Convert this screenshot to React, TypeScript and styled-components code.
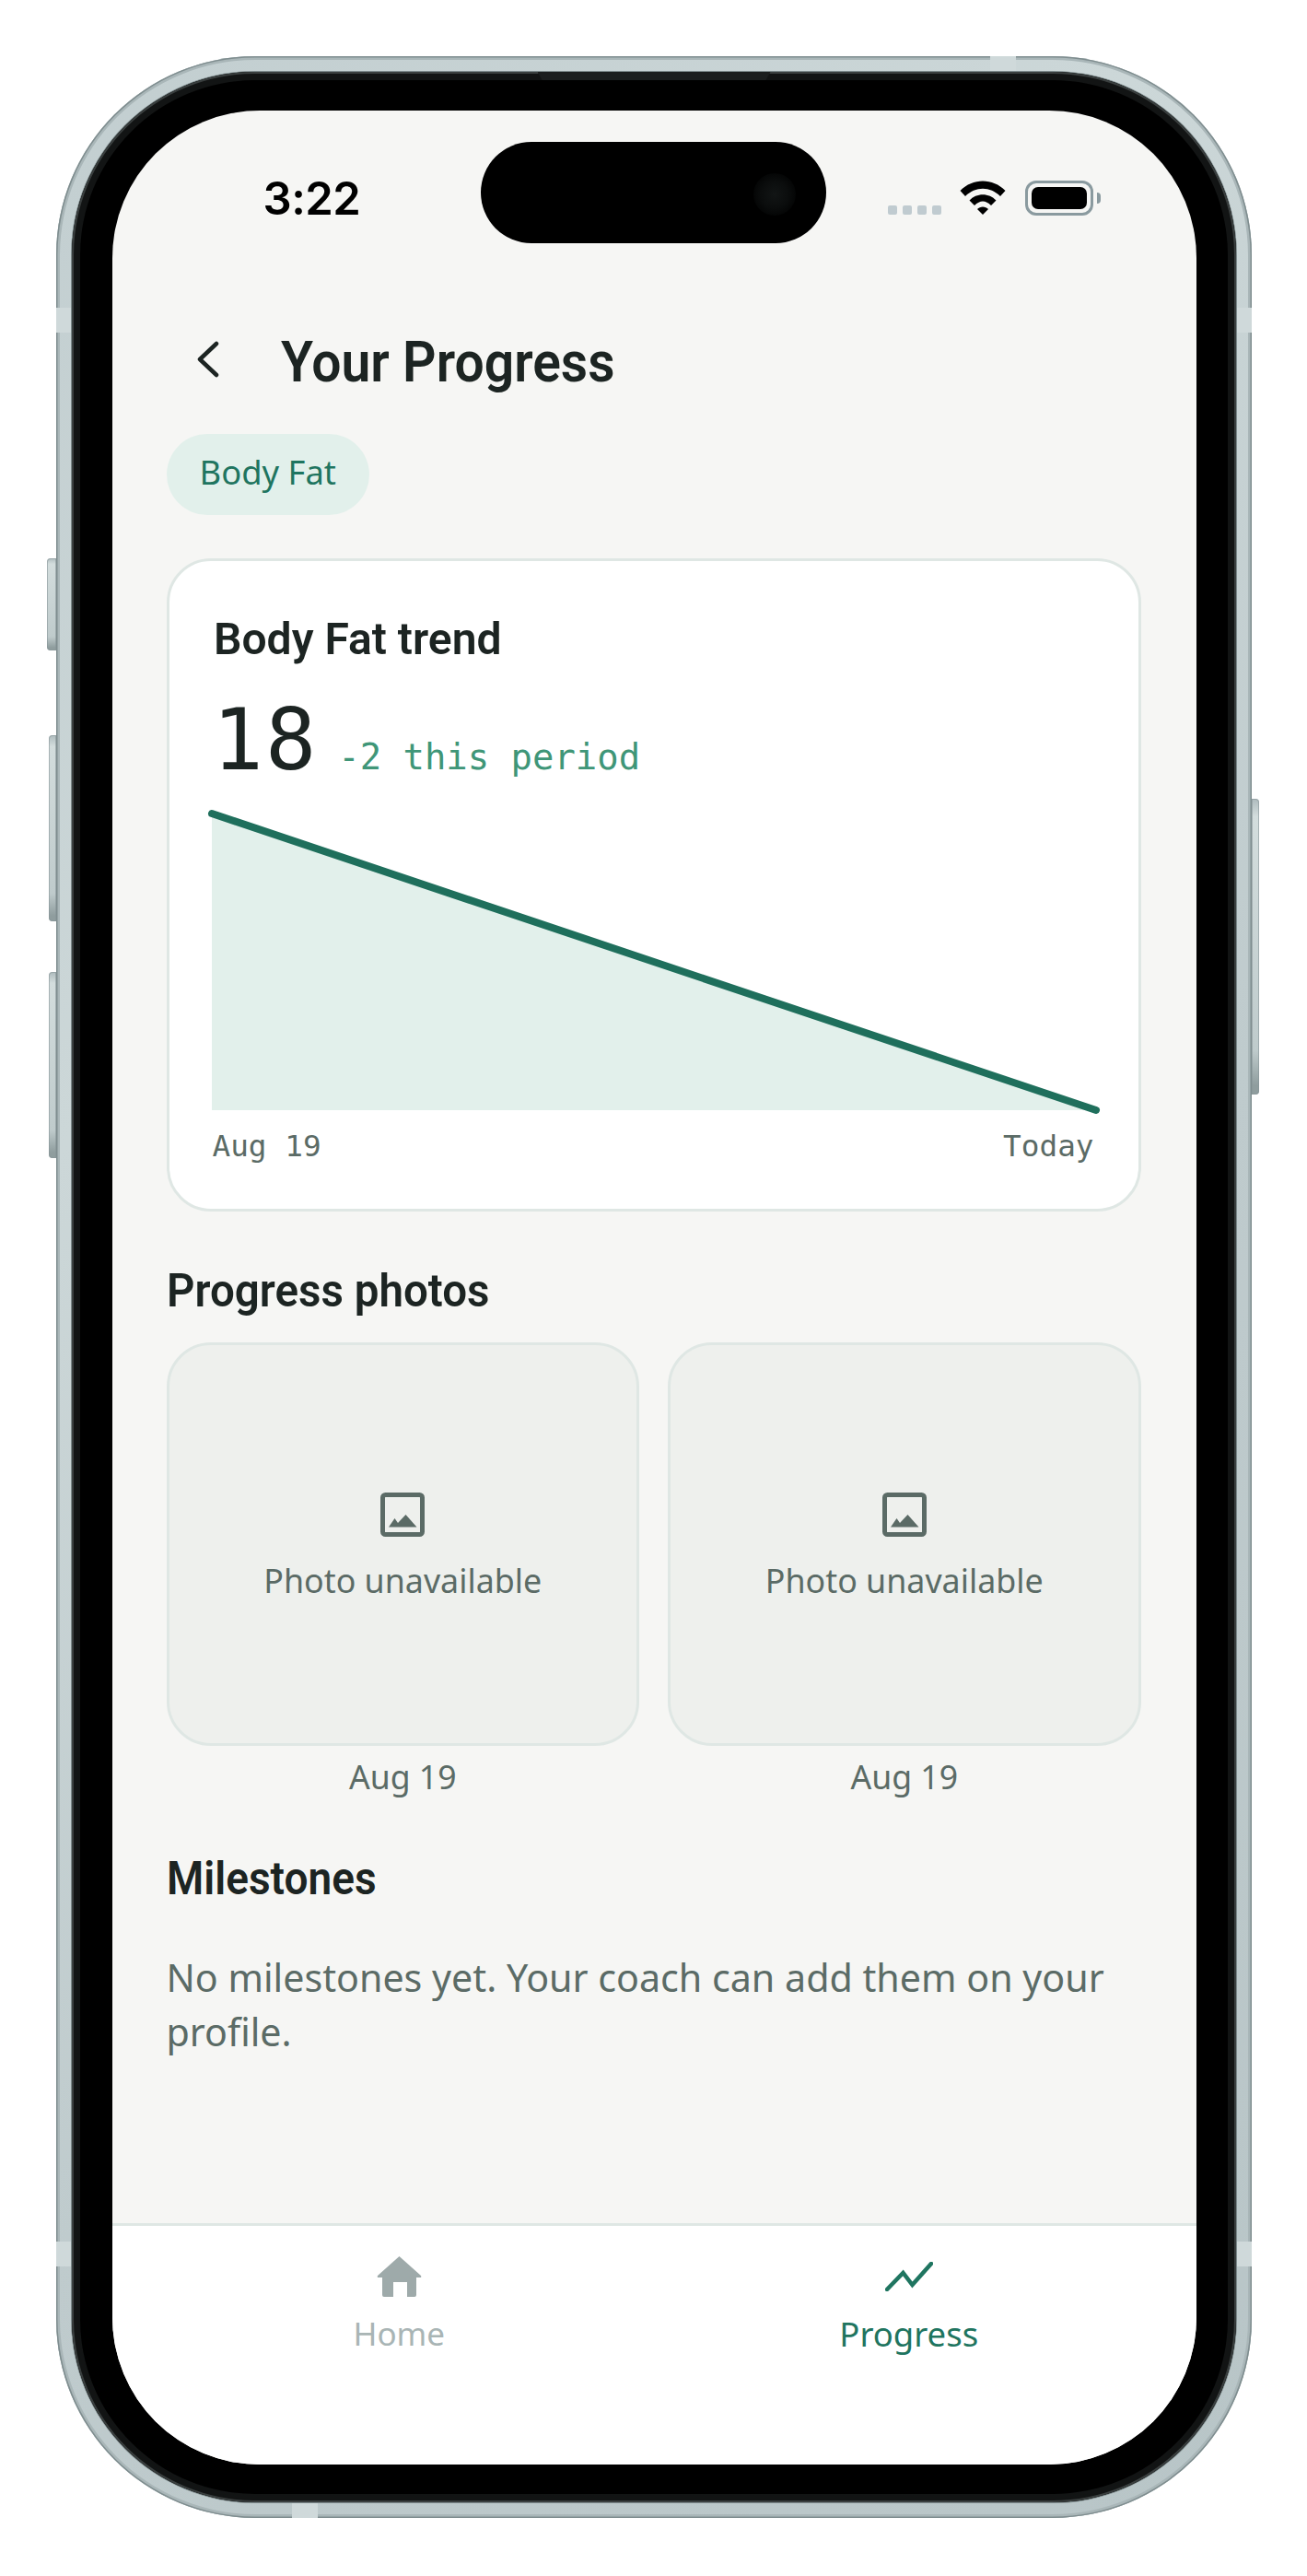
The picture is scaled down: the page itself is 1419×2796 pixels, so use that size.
import React from "react";
import styled, { createGlobalStyle } from "styled-components";

const Global = createGlobalStyle`
  html, body { margin: 0; padding: 0; background: #fff; }
  body { font-family: "Noto Sans", Roboto, sans-serif; }
  * { box-sizing: border-box; }
`;

const Page = styled.div`
  width: 1419px;
  height: 2796px;
  padding-top: 61px;
  display: flex;
  justify-content: center;
  align-items: flex-start;
  overflow: hidden;
`;

const Device = styled.div`
  position: relative;
  width: 1298px;
  height: 2672px;
  padding: 17px;
  border-radius: 216px;
  background: linear-gradient(135deg, #c2ced0 0%, #ccd7d8 30%, #bfcbcd 60%, #b8c5c7 100%);
  box-shadow: inset 0 0 0 1.5px #7f8d8f, inset 0 0 0 4px #a9b6b8;
`;

const SideButton = styled.div<{ $side: "left" | "right"; $top: number; $height: number; $width: number }>`
  position: absolute;
  top: ${(p) => p.$top}px;
  height: ${(p) => p.$height}px;
  width: ${(p) => p.$width}px;
  ${(p) => (p.$side === "left" ? `left: -${p.$width}px;` : `right: -${p.$width}px;`)}
  border-radius: ${(p) => (p.$side === "left" ? "4px 0 0 4px" : "0 4px 4px 0")};
  background: linear-gradient(180deg, #aebbbd 0%, #d3dddd 6%, #bfcbcc 85%, #8f9d9e 97%);
  box-shadow: inset 0 0 0 1px #87959799;
`;

const Band = styled.div<{ $x?: number; $y?: number; $right?: boolean; $bottom?: boolean; $horizontal?: boolean }>`
  position: absolute;
  background: #cfd9da;
  ${(p) =>
    p.$horizontal
      ? `left: ${p.$x}px; width: 28px; height: 17px; ${p.$bottom ? "bottom: 0;" : "top: 0;"}`
      : `top: ${p.$y}px; height: 27px; width: 17px; ${p.$right ? "right: 0;" : "left: 0;"}`}
`;

const Bezel = styled.div`
  position: relative;
  width: 100%;
  height: 100%;
  padding: 42px 43px 41px 44px;
  border-radius: 199px;
  background: #000;
  box-shadow: 0 0 0 1px #7c898b, inset 0 0 0 2px #3a3f3f, inset 0 0 0 9px #121414;
`;

const Speaker = styled.div`
  position: absolute;
  top: 0;
  left: 506px;
  width: 253px;
  height: 9px;
  background: #1b1e1e;
  clip-path: polygon(0 0, 100% 0, 98% 100%, 2% 100%);
`;

const Screen = styled.div`
  position: relative;
  width: 100%;
  height: 100%;
  border-radius: 160px;
  background: #f6f6f4;
  overflow: hidden;
  display: flex;
  flex-direction: column;
`;

const StatusBar = styled.div`
  position: relative;
  flex: none;
  height: 144px;
  display: flex;
  justify-content: space-between;
  align-items: flex-start;
  padding: 0 112px 0 164px;
`;

const Time = styled.div`
  margin-top: 66px;
  font-family: Inter, sans-serif;
  font-weight: 600;
  font-size: 49px;
  line-height: 60px;
  color: #000;
  letter-spacing: -0.5px;
`;

const Island = styled.div`
  position: absolute;
  left: 400px;
  top: 34px;
  width: 375px;
  height: 110px;
  border-radius: 55px;
  background: #000;
`;

const Lens = styled.div`
  position: absolute;
  left: 296px;
  top: 34px;
  width: 46px;
  height: 46px;
  border-radius: 50%;
  background: radial-gradient(circle, #121515 0%, #0b0d0d 45%, #040505 72%, #000 100%);
`;

const StatusIcons = styled.div`
  margin-top: 76px;
  display: flex;
  align-items: flex-start;
`;

const Dots = styled.div`
  display: flex;
  gap: 6px;
  margin-top: 27px;
  margin-right: 20px;
`;

const Dot = styled.span`
  width: 10px;
  height: 10px;
  border-radius: 2px;
  background: #c0cbd0;
`;

const Wifi = styled.svg`
  display: block;
  width: 50px;
  height: 37px;
  margin-right: 21px;
`;

const Battery = styled.div`
  position: relative;
  width: 74px;
  height: 38px;
  padding: 4px;
  border: 3px solid #8a9a9f;
  border-radius: 12px;
`;

const BatteryFill = styled.div`
  width: 100%;
  height: 100%;
  border-radius: 7px;
  background: #000;
`;

const BatteryNub = styled.div`
  position: absolute;
  right: -11px;
  top: 10px;
  width: 4px;
  height: 12px;
  border-radius: 0 4px 4px 0;
  background: #8a9a9f;
`;

const Main = styled.main`
  flex: 1;
  padding: 0 60px 0 59px;
`;

const Header = styled.header`
  display: flex;
  align-items: flex-start;
  height: 207px;
  padding-top: 104px;
`;

const Back = styled.svg`
  display: block;
  width: 26px;
  height: 40px;
  margin-left: 32px;
  margin-top: 2px;
  flex: none;
`;

const Title = styled.h1`
  margin: -10px 0 0 66px;
  font-family: Roboto, sans-serif;
  font-weight: 600;
  font-size: 62px;
  line-height: 70px;
  color: #1c2422;
  white-space: nowrap;
  transform: scaleX(0.92);
  transform-origin: left center;
`;

const Chip = styled.div`
  display: inline-flex;
  align-items: center;
  height: 88px;
  padding: 0 36px 6px;
  border-radius: 44px;
  background: #e2f0eb;
  color: #1f7560;
  font-family: "Noto Sans", sans-serif;
  font-size: 36.4px;
`;

const Card = styled.section`
  margin-top: 47px;
  height: 709px;
  padding: 55px 45px 0;
  border: 3px solid #dfe7e4;
  border-radius: 48px;
  background: #fff;
`;

const CardTitle = styled.h2`
  margin: 0;
  padding-left: 3px;
  font-family: Roboto, sans-serif;
  font-weight: 600;
  font-size: 49px;
  line-height: 60px;
  color: #1c2422;
  transform: scaleX(0.98);
  transform-origin: left center;
`;

const ValueRow = styled.div`
  display: flex;
  align-items: baseline;
  gap: 22px;
  margin-top: 24px;
  padding-left: 2px;
  font-family: "DejaVu Sans Mono", monospace;
`;

const Value = styled.span`
  font-size: 92px;
  letter-spacing: 2px;
  line-height: 112px;
  color: #1c2422;
`;

const Delta = styled.span`
  font-size: 38.9px;
  color: #3f9678;
`;

const Chart = styled.svg`
  display: block;
  margin: 16px 0 0 1px;
  width: 960px;
  height: 330px;
  overflow: visible;
`;

const AxisRow = styled.div`
  display: flex;
  justify-content: space-between;
  margin-top: 18px;
  padding: 0 3px 0 2px;
  font-family: "DejaVu Sans Mono", monospace;
  font-size: 32.7px;
  line-height: 40px;
  color: #5b6b66;
`;

const SectionTitle = styled.h2<{ $top: number; $squeeze: number }>`
  margin: ${(p) => p.$top}px 0 0;
  font-family: Roboto, sans-serif;
  font-weight: 600;
  font-size: 50px;
  line-height: 60px;
  color: #1c2422;
  transform: scaleX(${(p) => p.$squeeze});
  transform-origin: left center;
`;

const Photos = styled.div`
  display: grid;
  grid-template-columns: 1fr 1fr;
  gap: 31px;
  margin-top: 26px;
`;

const PhotoColumn = styled.div`
  display: flex;
  flex-direction: column;
  align-items: center;
`;

const PhotoBox = styled.div`
  width: 100%;
  height: 438px;
  border: 3px solid #dfe7e4;
  border-radius: 48px;
  background: #eef0ed;
  display: flex;
  flex-direction: column;
  align-items: center;
  padding-top: 160px;
`;

const PhotoIcon = styled.svg`
  display: block;
  width: 48px;
  height: 48px;
`;

const PhotoText = styled.div`
  margin-top: 22px;
  font-family: "Noto Sans", sans-serif;
  font-size: 35.8px;
  line-height: 50px;
  color: #5b6b66;
`;

const PhotoDate = styled.div`
  margin-top: 10px;
  font-family: "Noto Sans", sans-serif;
  font-size: 35.6px;
  line-height: 46px;
  color: #5b6b66;
`;

const Body = styled.p`
  margin: 48px 0 0;
  font-family: "Noto Sans", sans-serif;
  font-size: 41.2px;
  line-height: 59px;
  color: #5b6b66;
`;

const TabBar = styled.nav`
  flex: none;
  height: 262px;
  border-top: 3px solid #dfe7e4;
  background: #fff;
  display: grid;
  grid-template-columns: 1fr 1fr;
  padding: 0 35px;
`;

const Tab = styled.div<{ $active?: boolean }>`
  display: flex;
  flex-direction: column;
  align-items: center;
  color: ${(p) => (p.$active ? "#1f7560" : "#a9b5b5")};
  font-family: "Noto Sans", sans-serif;
  font-size: ${(p) => (p.$active ? "36.5px" : "35px")};
`;

const TabIconBox = styled.div`
  height: 48px;
  margin-top: 31px;
  display: flex;
  align-items: center;
`;

const TabLabel = styled.div`
  margin-top: 13px;
  line-height: 50px;
`;

const Icon = styled.svg`
  display: block;
`;

const PhotoCard = () => (
  <PhotoColumn>
    <PhotoBox>
      <PhotoIcon viewBox="0 0 48 48">
        <rect x="2.5" y="2.5" width="43" height="43" rx="3" fill="none" stroke="#5b6b66" strokeWidth="5" />
        <path d="M9 37.5 L15.5 28 L19 33 L27.5 24 L39.5 37.5 Z" fill="#5b6b66" />
      </PhotoIcon>
      <PhotoText>Photo unavailable</PhotoText>
    </PhotoBox>
    <PhotoDate>Aug 19</PhotoDate>
  </PhotoColumn>
);

export default function App() {
  return (
    <Page>
      <Global />
      <Device>
        <SideButton $side="left" $top={545} $height={100} $width={10} />
        <SideButton $side="left" $top={737} $height={202} $width={8} />
        <SideButton $side="left" $top={994} $height={202} $width={8} />
        <SideButton $side="right" $top={806} $height={321} $width={8} />
        <Band $horizontal $x={1014} />
        <Band $horizontal $bottom $x={256} />
        <Band $y={273} />
        <Band $y={273} $right />
        <Band $y={2372} />
        <Band $y={2372} $right />
        <Bezel>
          <Speaker />
          <Screen>
            <StatusBar>
              <Time>3:22</Time>
              <Island>
                <Lens />
              </Island>
              <StatusIcons>
                <Dots>
                  <Dot />
                  <Dot />
                  <Dot />
                  <Dot />
                </Dots>
                <Wifi viewBox="0 0 50 37">
                  <path d="M0.5 11 C14 -3 36 -3 49.5 11 L44 17 C33 6 17 6 6 17 Z" fill="#000" />
                  <path d="M10.5 21.5 C18 13 32 13 39.5 21.5 L34 27 C28 21 22 21 16 27 Z" fill="#000" />
                  <path d="M19 31 C22 27.5 28 27.5 31 31 L25 37 Z" fill="#000" />
                </Wifi>
                <Battery>
                  <BatteryFill />
                  <BatteryNub />
                </Battery>
              </StatusIcons>
            </StatusBar>
            <Main>
              <Header>
                <Back viewBox="0 0 26 40">
                  <path d="M22 3 L4 20 L22 37" fill="none" stroke="#1c2422" strokeWidth="4.5" strokeLinecap="round" strokeLinejoin="round" />
                </Back>
                <Title>Your Progress</Title>
              </Header>
              <Chip>Body Fat</Chip>
              <Card>
                <CardTitle>Body Fat trend</CardTitle>
                <ValueRow>
                  <Value>18</Value>
                  <Delta>-2 this period</Delta>
                </ValueRow>
                <Chart viewBox="0 0 960 330">
                  <polygon points="0,7 960,329 0,329" fill="#e2f0eb" />
                  <line x1="0" y1="7" x2="960" y2="329" stroke="#1f6f5c" strokeWidth="8" strokeLinecap="round" />
                </Chart>
                <AxisRow>
                  <span>Aug 19</span>
                  <span>Today</span>
                </AxisRow>
              </Card>
              <SectionTitle $top={56} $squeeze={0.95}>Progress photos</SectionTitle>
              <Photos>
                <PhotoCard />
                <PhotoCard />
              </Photos>
              <SectionTitle $top={58} $squeeze={0.92}>Milestones</SectionTitle>
              <Body>No milestones yet. Your coach can add them on your profile.</Body>
            </Main>
            <TabBar>
              <Tab>
                <TabIconBox>
                  <Icon width="49" height="44" viewBox="0 0 49 44">
                    <path d="M24.5 0 L48 21 Q49 23 47 23 L43 23 L43 42 Q43 44 41 44 L33 44 L33 28 L18 28 L18 44 L8 44 Q6 44 6 42 L6 23 L2 23 Q0 23 1 21 Z" fill="#9eaaaa" />
                  </Icon>
                </TabIconBox>
                <TabLabel>Home</TabLabel>
              </Tab>
              <Tab $active>
                <TabIconBox>
                  <Icon width="52" height="32" viewBox="0 0 52 32">
                    <path d="M2 30 L19.5 12 L29.5 25 L50 2" fill="none" stroke="#1f7560" strokeWidth="4.5" strokeLinecap="round" strokeLinejoin="miter" />
                  </Icon>
                </TabIconBox>
                <TabLabel>Progress</TabLabel>
              </Tab>
            </TabBar>
          </Screen>
        </Bezel>
      </Device>
    </Page>
  );
}
